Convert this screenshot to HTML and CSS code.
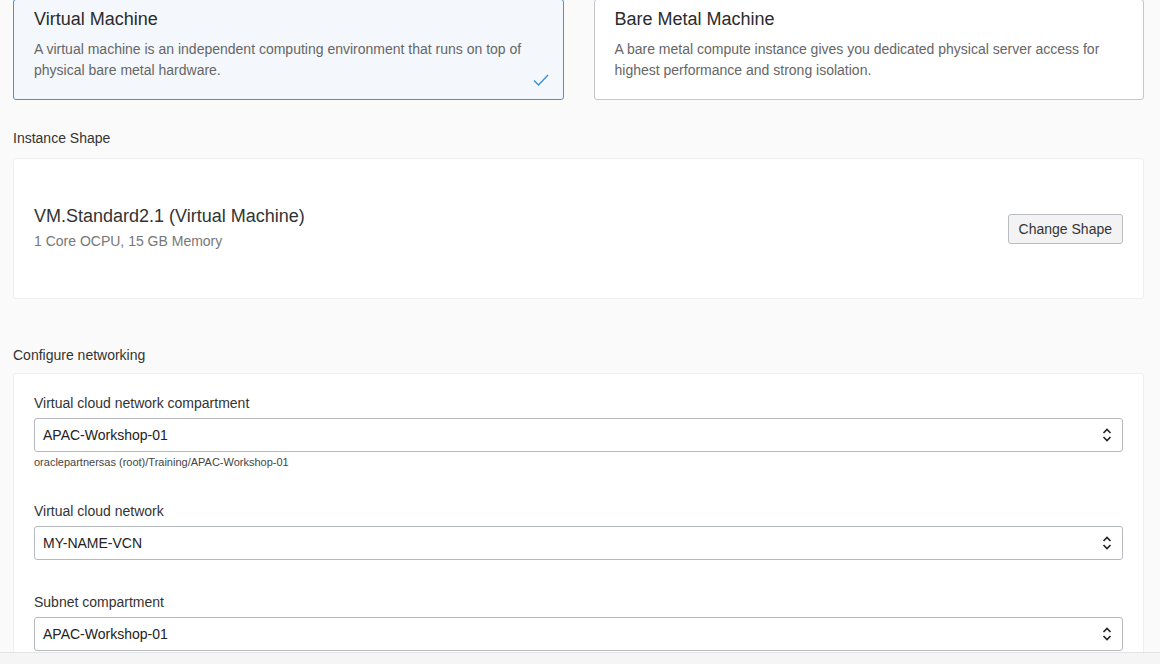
FILE: index.html
```html
<!DOCTYPE html>
<html>
<head>
<meta charset="utf-8">
<link rel="stylesheet" href="styles.css">
</head>
<body>
<div class="page">
  <div class="type-row">
    <div class="type-card selected">
      <div class="type-title">Virtual Machine</div>
      <div class="type-desc">A virtual machine is an independent computing environment that runs on top of physical bare metal hardware.</div>
      <svg class="check" width="16" height="12" viewBox="0 0 16 12"><path d="M1 6.5 L5.5 11 L15 1" fill="none" stroke="#3b8ee0" stroke-width="1.4"/></svg>
    </div>
    <div class="type-card">
      <div class="type-title">Bare Metal Machine</div>
      <div class="type-desc">A bare metal compute instance gives you dedicated physical server access for highest performance and strong isolation.</div>
    </div>
  </div>

  <div class="section-label label-shape">Instance Shape</div>
  <div class="shape-card">
    <div class="shape-info">
      <div class="shape-name">VM.Standard2.1 (Virtual Machine)</div>
      <div class="shape-sub">1 Core OCPU, 15 GB Memory</div>
    </div>
    <button class="btn">Change Shape</button>
  </div>

  <div class="section-label label-net">Configure networking</div>
  <div class="net-card">
    <div class="field">
      <div class="field-label">Virtual cloud network compartment</div>
      <div class="select"><span>APAC-Workshop-01</span>
        <svg width="10" height="14" viewBox="0 0 10 14"><path d="M1.5 5 L5 1.5 L8.5 5 M1.5 9 L5 12.5 L8.5 9" fill="none" stroke="#222" stroke-width="1.6"/></svg>
      </div>
      <div class="helper">oraclepartnersas (root)/Training/APAC-Workshop-01</div>
    </div>
    <div class="field">
      <div class="field-label">Virtual cloud network</div>
      <div class="select"><span>MY-NAME-VCN</span>
        <svg width="10" height="14" viewBox="0 0 10 14"><path d="M1.5 5 L5 1.5 L8.5 5 M1.5 9 L5 12.5 L8.5 9" fill="none" stroke="#222" stroke-width="1.6"/></svg>
      </div>
    </div>
    <div class="field">
      <div class="field-label">Subnet compartment</div>
      <div class="select"><span>APAC-Workshop-01</span>
        <svg width="10" height="14" viewBox="0 0 10 14"><path d="M1.5 5 L5 1.5 L8.5 5 M1.5 9 L5 12.5 L8.5 9" fill="none" stroke="#222" stroke-width="1.6"/></svg>
      </div>
    </div>
  </div>
</div>
<div class="footer"></div>
</body>
</html>
```
FILE: styles.css
```css
html, body {
  margin: 0;
  padding: 0;
  background: #fafafa;
  font-family: "Liberation Sans", Arial, sans-serif;
  color: #333;
  overflow: hidden;
}
.page {
  padding: 0 16px 0 13px;
}
.type-row {
  display: flex;
  gap: 30px;
  margin-top: -1px;
}
.type-card {
  position: relative;
  flex: 1;
  background: #fff;
  border: 1px solid #c4c7cc;
  border-radius: 3px;
  padding: 9px 20px 18px;
  height: 72px;
}
.type-card.selected {
  background: #f4f8fd;
  border-color: #4a90e2;
}
.type-title {
  font-size: 18px;
  line-height: 20px;
  color: #2b2b2b;
  margin-bottom: 10px;
}
.type-desc {
  font-size: 14px;
  line-height: 21px;
  color: #666;
}
.check {
  position: absolute;
  right: 14px;
  bottom: 13px;
}
.section-label {
  font-size: 14px;
  line-height: 20px;
  color: #333;
}
.label-shape {
  margin-top: 28px;
  margin-bottom: 10px;
}
.shape-card {
  background: #fff;
  border: 1px solid #efefef;
  border-radius: 3px;
  height: 139px;
  display: flex;
  align-items: center;
  justify-content: space-between;
  padding: 0 20px;
}
.shape-name {
  font-size: 18px;
  line-height: 20px;
  color: #333;
  margin-bottom: 5px;
}
.shape-sub {
  font-size: 14px;
  line-height: 20px;
  color: #777;
}
.btn {
  font-family: "Liberation Sans", Arial, sans-serif;
  font-size: 14px;
  color: #333;
  background: #f3f3f3;
  border: 1px solid #b9bcc1;
  border-radius: 3px;
  height: 30px;
  padding: 0 10px;
}
.label-net {
  margin-top: 46px;
  margin-bottom: 8px;
}
.net-card {
  background: #fff;
  border: 1px solid #efefef;
  border-radius: 3px;
  padding: 19px 20px 40px;
}
.field {
  margin-bottom: 32px;
}
.field-label {
  font-size: 14px;
  line-height: 20px;
  color: #333;
  margin-bottom: 5px;
}
.select {
  height: 32px;
  border: 1px solid #b6bac0;
  border-radius: 3px;
  background: #fff;
  display: flex;
  align-items: center;
  justify-content: space-between;
  padding: 0 10px 0 8px;
  font-size: 14px;
  color: #222;
}
.helper {
  font-size: 11px;
  line-height: 14px;
  color: #444;
  margin-top: 3px;
}
.footer {
  position: fixed;
  left: 0;
  right: 0;
  bottom: 0;
  height: 11px;
  background: #f5f5f5;
  border-top: 1px solid #e3e3e3;
}
```
